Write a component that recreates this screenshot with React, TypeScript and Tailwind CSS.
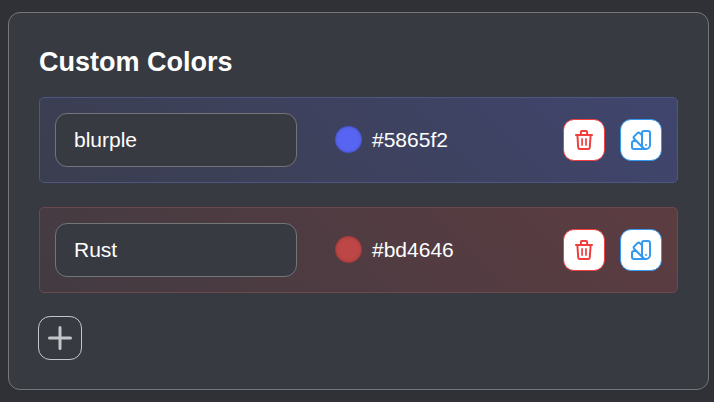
const rows = [
  {
    name: 'blurple',
    hex: '#5865f2',
    row: 'border-[#505682] bg-linear-45 from-[#3b3e4f] to-[#40456e]',
    dot: 'bg-[#5865f2]',
  },
  {
    name: 'Rust',
    hex: '#bd4646',
    row: 'border-[#6d484d] bg-linear-45 from-[#433b42] to-[#5c3c41]',
    dot: 'bg-[#bd4646]',
  },
];

function TrashIcon() {
  return (
    <svg width="24" height="24" viewBox="0 0 24 24" fill="none" stroke="currentColor" strokeWidth="2" strokeLinejoin="round">
      <path d="M3.2 6.9h17.6M8.9 6.5V4c0-.6.3-.9.9-.9h4.4c.6 0 .9.3.9.9v2.5" />
      <path d="M5.4 7.2l.8 12.1c.1 1.1.6 1.6 1.6 1.6h8.4c1 0 1.5-.5 1.6-1.6l.8-12.1" />
      <path d="M10.1 10.2v7.5M14 10.2v7.5" strokeWidth="1.7" />
    </svg>
  );
}

function SwatchIcon() {
  return (
    <svg width="24" height="24" viewBox="0 0 24 24" fill="none" stroke="currentColor" strokeWidth="2" strokeLinecap="round" strokeLinejoin="round">
      <path d="M19 3h-4a2 2 0 0 0-2 2v12a4 4 0 0 0 8 0V5a2 2 0 0 0-2-2" />
      <path d="M13 7.35l-2-2a2 2 0 0 0-2.828 0L5.344 8.178a2 2 0 0 0 0 2.828l9 9" />
      <path d="M7.3 13H5a2 2 0 0 0-2 2v4a2 2 0 0 0 2 2h12" />
      <path d="M17 17v.01" />
    </svg>
  );
}

export default function App() {
  return (
    <main className="h-[402px] w-[714px] overflow-hidden bg-[#303136] pl-2 pt-3 font-['Liberation_Sans',Arial,sans-serif] text-white">
      <section className="h-[378px] w-[701px] rounded-[12px] border border-[#75777b] bg-[#373a41] pl-[30px]">
        <h1 className="mt-8 h-[52px] text-[27px] leading-[34px] font-bold">Custom Colors</h1>
        <div className="flex w-[639px] flex-col gap-6">
          {rows.map((r) => (
            <div key={r.hex} className={`flex h-[86px] items-center rounded-[5px] border px-[15px] ${r.row}`}>
              <input
                aria-label="Color name"
                defaultValue={r.name}
                className="h-[54px] w-[242px] rounded-[12px] border border-[#72757a] bg-[#373a41] px-[18px] text-[21px] outline-none"
              />
              <span className={`mb-px ml-[38px] size-[27px] shrink-0 rounded-full shadow-[inset_0_0_0_1px_rgba(0,0,0,0.1),inset_0_0_4px_rgba(0,0,0,0.15)] ${r.dot}`} />
              <span className="ml-[10px] text-[21px] leading-8">{r.hex}</span>
              <div className="ml-auto flex gap-[15px]">
                <button aria-label="Delete" className="flex size-[42px] items-center justify-center rounded-[11px] border border-[#f03e3e] bg-white text-[#f03e3e]">
                  <TrashIcon />
                </button>
                <button aria-label="Edit" className="flex size-[42px] items-center justify-center rounded-[11px] border border-[#339af0] bg-white text-[#339af0]">
                  <SwatchIcon />
                </button>
              </div>
            </div>
          ))}
        </div>
        <button aria-label="Add color" className="mt-[23px] -ml-px flex size-11 items-center justify-center rounded-[12px] border border-[#c4c6ca] text-[#c4c6ca]">
          <svg width="26" height="26" viewBox="0 0 26 26" fill="none" stroke="currentColor" strokeWidth="3" strokeLinecap="round">
            <path d="M13 2.5v21M2.5 13h21" />
          </svg>
        </button>
      </section>
    </main>
  );
}
